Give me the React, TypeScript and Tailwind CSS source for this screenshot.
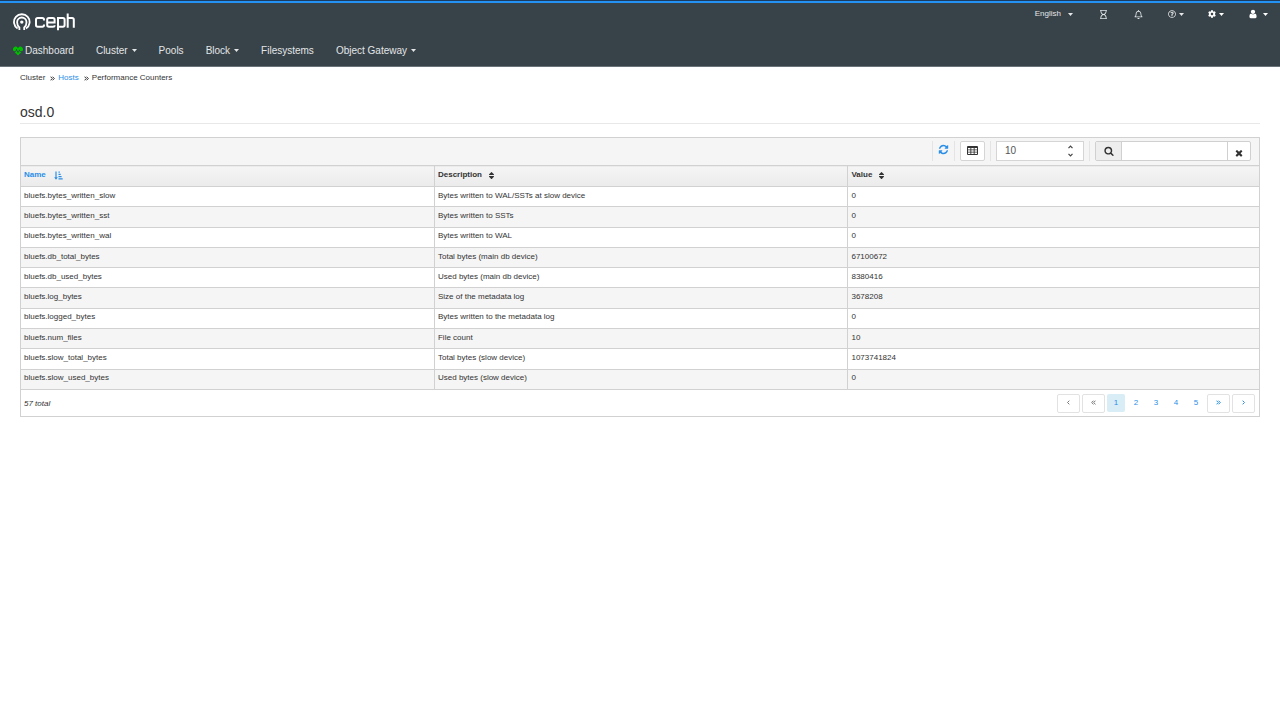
import type { ReactNode } from 'react';
import {
  FaCog,
  FaHeartbeat,
  FaRegBell,
  FaRegHourglass,
  FaRegQuestionCircle,
  FaSort,
} from 'react-icons/fa';

const rows: [string, string, string][] = [
  ['bluefs.bytes_written_slow', 'Bytes written to WAL/SSTs at slow device', '0'],
  ['bluefs.bytes_written_sst', 'Bytes written to SSTs', '0'],
  ['bluefs.bytes_written_wal', 'Bytes written to WAL', '0'],
  ['bluefs.db_total_bytes', 'Total bytes (main db device)', '67100672'],
  ['bluefs.db_used_bytes', 'Used bytes (main db device)', '8380416'],
  ['bluefs.log_bytes', 'Size of the metadata log', '3678208'],
  ['bluefs.logged_bytes', 'Bytes written to the metadata log', '0'],
  ['bluefs.num_files', 'File count', '10'],
  ['bluefs.slow_total_bytes', 'Total bytes (slow device)', '1073741824'],
  ['bluefs.slow_used_bytes', 'Used bytes (slow device)', '0'],
];

const icons = {
  user: 'M1536 1399q0 109-62.5 187t-150.5 78h-854q-88 0-150.5-78t-62.5-187q0-85 8.5-160.5t31.5-152 58.5-131 94-89 134.5-34.5q131 128 313 128t313-128q76 0 134.5 34.5t94 89 58.5 131 31.5 152 8.5 160.5zm-256-887q0 159-112.5 271.5t-271.5 112.5-271.5-112.5-112.5-271.5 112.5-271.5 271.5-112.5 271.5 112.5 112.5 271.5z',
  refresh:
    'M1639 1056q0 5-1 7-64 268-268 434.5t-478 166.5q-146 0-282.5-55t-243.5-157l-129 129q-19 19-45 19t-45-19-19-45v-448q0-26 19-45t45-19h448q26 0 45 19t19 45-19 45l-137 137q71 66 161 102t187 36q134 0 250-65t186-179q11-17 53-117 8-23 30-23h192q13 0 22.5 9.5t9.5 22.5zm25-800v448q0 26-19 45t-45 19h-448q-26 0-45-19t-19-45 19-45l138-138q-148-137-349-137-134 0-250 65t-186 179q-11 17-53 117-8 23-30 23h-199q-13 0-22.5-9.5t-9.5-22.5v-7q65-268 270-434.5t480-166.5q146 0 284 55.5t245 156.5l130-129q19-19 45-19t45 19 19 45z',
  times:
    'M1490 1322q0 40-28 68l-136 136q-28 28-68 28t-68-28l-294-294-294 294q-28 28-68 28t-68-28l-136-136q-28-28-28-68t28-68l294-294-294-294q-28-28-28-68t28-68l136-136q28-28 68-28t68 28l294 294 294-294q28-28 68-28t68 28l136 136q28 28 28 68t-28 68l-294 294 294 294q28 28 28 68z',
  search:
    'M1216 832q0-185-131.5-316.5t-316.5-131.5-316.5 131.5-131.5 316.5 131.5 316.5 316.5 131.5 316.5-131.5 131.5-316.5zm512 832q0 52-38 90t-90 38q-54 0-90-38l-343-342q-179 124-399 124-143 0-273.5-55.5t-225-150-150-225-55.5-273.5 55.5-273.5 150-225 225-150 273.5-55.5 273.5 55.5 225 150 150 225 55.5 273.5q0 220-124 399l343 343q37 37 37 90z',
};

function Icon({ name, className }: { name: keyof typeof icons; className: string }) {
  return (
    <svg viewBox="0 0 1792 1792" fill="currentColor" aria-hidden="true" className={className}>
      <path d={icons[name]} />
    </svg>
  );
}

function SortAscending() {
  return (
    <svg viewBox="0 0 9 9" fill="none" stroke="currentColor" aria-hidden="true" className="size-[9px]">
      <path d="M2 .5V7.5" strokeWidth="1.2" />
      <path d="M.2 6.3h3.6L2 8.7z" fill="currentColor" stroke="none" />
      <path d="M4.5 1.2h1.3M4.5 3.4h2.2M4.5 5.6h3.1M4.5 7.8h4.2" strokeWidth="1.2" />
    </svg>
  );
}

function Caret() {
  return (
    <svg viewBox="0 0 5 3" fill="currentColor" aria-hidden="true" className="h-[3px] w-[5px]">
      <path d="M0 0h5L2.5 3z" />
    </svg>
  );
}

function Chevrons({ double, left, className }: { double?: boolean; left?: boolean; className?: string }) {
  return (
    <svg
      viewBox="0 0 6 6"
      fill="none"
      stroke="currentColor"
      strokeWidth="1.2"
      aria-hidden="true"
      className={`size-[5px] ${left ? 'rotate-180' : ''} ${className ?? ''}`}
    >
      {double ? <path d="M.6.8 2.8 3 .6 5.2M3 .8 5.2 3 3 5.2" /> : <path d="M2 .8 4.2 3 2 5.2" />}
    </svg>
  );
}

function Logo() {
  return (
    <a href="#" aria-label="ceph" className="block w-[62px]">
      <svg viewBox="0 0 62 18" fill="none" stroke="#fff" className="h-[18px] w-[62px]">
        <g strokeWidth="1.8">
          <path d="M4.600 15.600A7.800 7.800 0 1 1 13 15.600" />
          <path d="M6.400 17v-2.500C4.900 13.300 4.100 11.400 4.100 9.200a4.700 4.700 0 1 1 9.400 0c0 2.200-.8 4.100-2.300 5.300V17" />
        </g>
        <circle cx="8.800" cy="9.100" r="1.700" fill="#fff" stroke="none" />
        <g strokeWidth="2">
          <path d="M31 7.400V6.700q0-1.700-1.700-1.700h-4.600Q23 5 23 6.700v5.300q0 1.700 1.700 1.700h4.600q1.700 0 1.700-1.700v-.6" />
          <path d="M34.200 9.500h7.400V6.700q0-1.700-1.700-1.700h-4Q34.200 5 34.200 6.700v5.300q0 1.700 1.700 1.700h4q1.700 0 1.700-1.500" />
          <path d="M45 17.300V5h4.900q1.700 0 1.700 1.700v5.300q0 1.700-1.700 1.700h-4.900" />
          <path d="M54.700.4v14.300M54.700 5h4.400q1.700 0 1.700 1.700v8" />
        </g>
      </svg>
    </a>
  );
}

function NavItem({ label, menu }: { label: string; menu?: boolean }) {
  return (
    <a href="#" className="flex items-center gap-1 px-[11px]">
      {label}
      {menu && <Caret />}
    </a>
  );
}

function PageButton({ label, disabled, children }: { label: string; disabled?: boolean; children: ReactNode }) {
  return (
    <button
      type="button"
      aria-label={label}
      disabled={disabled}
      className="flex h-[19px] w-[23px] items-center justify-center rounded-xs border border-[#e2e2e2] bg-white pb-px text-[#2b8fe8] disabled:text-[#777]"
    >
      {children}
    </button>
  );
}

export default function App() {
  return (
    <div className="bg-white font-['Liberation_Sans',Arial,sans-serif] text-[8px] leading-3 text-[#333]">
      <header className="border-t border-[#1d3b5c] bg-[#374249] text-[#e4e6e7]">
        <div className="h-0.5 bg-[#2491f5]" />
        <div className="flex h-8 justify-between">
          <div className="pt-[10px] pl-[13px]">
            <Logo />
          </div>
          <div className="flex h-[22px] items-center pr-3">
            <button type="button" className="flex items-center gap-[7px]">
              English <Caret />
            </button>
            <button type="button" aria-label="Tasks" className="ml-[26px]">
              <FaRegHourglass className="size-[9px]" />
            </button>
            <button type="button" aria-label="Notifications" className="ml-[26px]">
              <FaRegBell className="size-[9px]" />
            </button>
            <button type="button" aria-label="Help" className="ml-[25px] flex items-center gap-[3px]">
              <FaRegQuestionCircle className="size-2" /> <Caret />
            </button>
            <button type="button" aria-label="Settings" className="ml-6 flex items-center gap-[3px] text-white">
              <FaCog className="size-2" /> <Caret />
            </button>
            <button type="button" aria-label="User" className="ml-6 flex items-center gap-[5px] text-white">
              <Icon name="user" className="size-2.5" /> <Caret />
            </button>
          </div>
        </div>
        <nav className="flex h-8 items-center border-b border-[#6b737a] pl-[13px] text-[10px]">
          <a href="#" className="flex items-center gap-0.5 pr-[11px]">
            <FaHeartbeat className="size-2.5 text-[#00c000]" />
            Dashboard
          </a>
          <NavItem label="Cluster" menu />
          <NavItem label="Pools" />
          <NavItem label="Block" menu />
          <NavItem label="Filesystems" />
          <NavItem label="Object Gateway" menu />
        </nav>
      </header>

      <main className="px-5">
        <nav aria-label="Breadcrumb" className="flex h-[22px] items-center">
          Cluster
          <Chevrons double className="mr-[3px] ml-[5px]" />
          <a href="#" className="text-[#2b8fe8]">Hosts</a>
          <Chevrons double className="mr-[3px] ml-[5px]" />
          Performance Counters
        </nav>
        <h1 className="mt-3.5 border-b border-[#e8e8e8] pb-0.5 text-sm leading-[18px]">osd.0</h1>

        <section className="mt-[13px] border border-[#d1d1d1]">
          <div className="flex h-[27px] items-start justify-end bg-[#f5f5f5] pt-[3px] pr-2">
            <div className="flex h-5 items-start border-x border-[#e4e4e4] px-[5px] pt-[3px]">
              <button type="button" aria-label="Refresh" className="text-[#2b8fe8]">
                <Icon name="refresh" className="size-[11px]" />
              </button>
            </div>
            <button
              type="button"
              aria-label="Columns"
              className="ml-[5px] flex h-5 w-[25px] items-center justify-center rounded-xs border border-[#d5d5d5] bg-white pb-0.5"
            >
              <svg viewBox="0 0 11 9" className="h-[9px] w-[11px]" aria-hidden="true">
                <rect width="11" height="9" rx="1" fill="#333" />
                <path d="M1 2h2.4v1.5H1zM4.3 2h2.4v1.5H4.3zM7.6 2H10v1.5H7.6zM1 4.3h2.4v1.4H1zM4.3 4.3h2.4v1.4H4.3zM7.6 4.3H10v1.4H7.6zM1 6.5h2.4V8H1zM4.3 6.5h2.4V8H4.3zM7.6 6.5H10V8H7.6z" fill="#fff" />
              </svg>
            </button>
            <div className="mx-[5px] h-5 w-px bg-[#e4e4e4]" />
            <div className="flex h-5 w-[88px] items-center border border-[#d5d5d5] bg-white px-2">
              <input aria-label="Rows per page" defaultValue="10" className="w-full min-w-0 text-[10px] text-[#555] outline-none" />
              <svg viewBox="0 0 7 12" fill="none" stroke="#444" strokeWidth="1.2" className="h-3 w-[9px] shrink-0" aria-hidden="true">
                <path d="M1.5 3.2 3.5 1.2 5.5 3.2M1.5 8.8l2 2 2-2" />
              </svg>
            </div>
            <div className="mx-[5px] h-5 w-px bg-[#e4e4e4]" />
            <div className="flex h-5 w-[156px] overflow-hidden rounded-xs border border-[#d0d0d0] bg-white">
              <label htmlFor="filter" className="flex w-[26px] items-center justify-center border-r border-[#d0d0d0] bg-[#eee]">
                <Icon name="search" className="size-2.5" />
              </label>
              <input id="filter" aria-label="Search" className="min-w-0 flex-1 px-1 outline-none" />
              <button type="button" aria-label="Clear" className="flex w-[23px] items-center justify-center border-l border-[#d0d0d0] pt-1">
                <Icon name="times" className="size-2.5" />
              </button>
            </div>
          </div>

          <table className="h-[225px] w-full table-fixed border-collapse text-left">
            <thead>
              <tr className="h-[21px] border-y border-[#d1d1d1] bg-linear-to-b from-[#f5f5f5] to-[#ebebeb]">
                <th className="w-[33.4%] border-r border-[#d1d1d1] px-[3px] pt-0 pb-0.5 text-[#2b8fe8]">
                  <span className="flex items-center gap-2">
                    Name <SortAscending />
                  </span>
                </th>
                <th className="w-[33.4%] border-r border-[#d1d1d1] px-[3px] pt-0 pb-0.5">
                  <span className="flex items-center gap-[5px]">
                    Description <FaSort className="size-[9px]" />
                  </span>
                </th>
                <th className="px-[3px] pt-0 pb-0.5">
                  <span className="flex items-center gap-[5px]">
                    Value <FaSort className="size-[9px]" />
                  </span>
                </th>
              </tr>
            </thead>
            <tbody>
              {rows.map(([name, description, value]) => (
                <tr key={name} className="border-b border-[#d1d1d1] even:bg-[#f5f5f5]">
                  <td className="border-r border-[#d1d1d1] px-[3px] pt-0 pb-0.5">{name}</td>
                  <td className="border-r border-[#d1d1d1] px-[3px] pt-0 pb-0.5">{description}</td>
                  <td className="px-[3px] pt-0 pb-0.5">{value}</td>
                </tr>
              ))}
            </tbody>
          </table>

          <footer className="flex h-[26px] items-center justify-between pr-1 pl-[3px]">
            <span className="pt-px italic">57 total</span>
            <nav aria-label="Pagination" className="flex items-center gap-0.5">
              <PageButton label="First page" disabled>
                <Chevrons left />
              </PageButton>
              <PageButton label="Previous page" disabled>
                <Chevrons double left />
              </PageButton>
              {[1, 2, 3, 4, 5].map((page) => (
                <button
                  key={page}
                  type="button"
                  className={`h-[18px] w-[18px] rounded-xs text-[#2b8fe8] ${page === 1 ? 'bg-[#d9edf7]' : ''}`}
                >
                  {page}
                </button>
              ))}
              <PageButton label="Next page">
                <Chevrons double />
              </PageButton>
              <PageButton label="Last page">
                <Chevrons />
              </PageButton>
            </nav>
          </footer>
        </section>
      </main>
    </div>
  );
}
